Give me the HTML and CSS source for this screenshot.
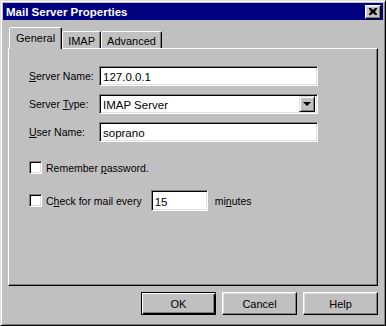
FILE: index.html
```html
<!DOCTYPE html>
<html lang="en">
<head>
    <meta charset="UTF-8">
    <meta name="viewport" content="width=device-width, initial-scale=1.0">
    <title>Mail Server Properties</title>
    <link rel="stylesheet" href="styles.css">
</head>
<body>
    <div class="window">
        <div class="titlebar">
            <span class="title">Mail Server Properties</span>
            <button class="close-btn" type="button">
                <svg width="8" height="7" viewBox="0 0 8 7">
                    <path d="M0 0h2l2 2 2-2h2v1L6 3.5 8 6v1H6L4 5 2 7H0V6l2-2.5L0 1z" fill="#000"/>
                </svg>
            </button>
        </div>

        <div class="content">
            <div class="tabs">
                <div class="tab active">General</div>
                <div class="tab">IMAP</div>
                <div class="tab">Advanced</div>
            </div>

            <div class="panel">
                <div class="field">
                    <label class="label"><u>S</u>erver Name:</label>
                    <div class="textbox">127.0.0.1</div>
                </div>
                <div class="field">
                    <label class="label">Server <u>T</u>ype:</label>
                    <div class="textbox select">
                        <span>IMAP Server</span>
                        <span class="drop-btn"><span class="arrow"></span></span>
                    </div>
                </div>
                <div class="field">
                    <label class="label"><u>U</u>ser Name:</label>
                    <div class="textbox">soprano</div>
                </div>

                <div class="check-row first">
                    <span class="checkbox"></span>
                    <span>Remember <u>p</u>assword.</span>
                </div>
                <div class="check-row">
                    <span class="checkbox"></span>
                    <span>C<u>h</u>eck for mail every</span>
                    <div class="textbox small">15</div>
                    <span>mi<u>n</u>utes</span>
                </div>
            </div>

            <div class="actions">
                <button class="btn default" type="button">OK</button>
                <button class="btn" type="button">Cancel</button>
                <button class="btn" type="button">Help</button>
            </div>
        </div>
    </div>
</body>
</html>
```

FILE: styles.css
```css
body {
    margin: 0;
    background-color: #c0c0c0;
    font-family: 'Liberation Sans', Arial, sans-serif;
    font-size: 10.5px;
    color: #000;
}

.window {
    width: 386px;
    height: 326px;
    box-sizing: border-box;
    border: 1px solid;
    border-color: #dfdfdf #000 #000 #dfdfdf;
    box-shadow: inset 1px 1px #fff, inset -1px -1px #808080;
    padding: 2px;
    background-color: #c0c0c0;
}

.titlebar {
    height: 17px;
    background-color: #000080;
    display: flex;
    align-items: center;
    justify-content: space-between;
    padding: 0 2px 0 3px;
}

.title {
    color: #fff;
    font-weight: bold;
    font-size: 11.5px;
}

.close-btn {
    width: 16px;
    height: 14px;
    padding: 0;
    background-color: #c0c0c0;
    border: 1px solid;
    border-color: #fff #000 #000 #fff;
    box-shadow: inset -1px -1px #808080, inset 1px 1px #dfdfdf;
    display: flex;
    align-items: center;
    justify-content: center;
}

.content {
    padding: 7px 5px 0 5px;
}

.tabs {
    display: flex;
    align-items: flex-end;
    height: 21px;
    padding-left: 1px;
    position: relative;
    z-index: 1;
}

.tab {
    height: 17px;
    box-sizing: border-box;
    border: 1px solid;
    border-bottom: none;
    border-color: #fff #000 transparent #fff;
    border-radius: 2px 2px 0 0;
    box-shadow: inset -1px 0 #808080;
    padding: 3px 5px 0 5px;
    background-color: #c0c0c0;
    font-size: 11px;
}

.tab.active {
    height: 22px;
    margin-bottom: -1px;
    padding: 4px 6px 0 6px;
}

.panel {
    height: 238px;
    box-sizing: border-box;
    border: 1px solid;
    border-color: #fff #000 #000 #fff;
    box-shadow: inset -1px -1px #808080;
    padding: 17px 20px 0 20px;
}

.field {
    display: flex;
    align-items: center;
    height: 20px;
    margin-bottom: 8px;
}

.label {
    width: 70px;
}

.textbox {
    width: 219px;
    height: 20px;
    box-sizing: border-box;
    background-color: #fff;
    border: 1px solid;
    border-color: #808080 #fff #fff #808080;
    box-shadow: inset 1px 1px #000, inset -1px -1px #dfdfdf;
    padding: 2px 3px 0 3px;
    font-size: 11.5px;
    display: flex;
    align-items: center;
}

.select {
    justify-content: space-between;
    padding-right: 2px;
}

.drop-btn {
    width: 16px;
    height: 16px;
    box-sizing: border-box;
    margin-top: -2px;
    border: 1px solid;
    border-color: #dfdfdf #000 #000 #dfdfdf;
    box-shadow: inset 1px 1px #fff, inset -1px -1px #808080;
    background-color: #c0c0c0;
    display: flex;
    align-items: center;
    justify-content: center;
}

.arrow {
    width: 0;
    height: 0;
    border-left: 4px solid transparent;
    border-right: 4px solid transparent;
    border-top: 4px solid #000;
}

.check-row {
    display: flex;
    align-items: center;
    height: 21px;
    margin-top: 12px;
}

.check-row.first {
    margin-top: 15px;
}

.checkbox {
    width: 13px;
    height: 13px;
    box-sizing: border-box;
    background-color: #fff;
    border: 1px solid;
    border-color: #808080 #fff #fff #808080;
    box-shadow: inset 1px 1px #000, inset -1px -1px #dfdfdf;
    margin-right: 4px;
}

.textbox.small {
    width: 57px;
    height: 21px;
    margin: 0 7px 0 9px;
}

.actions {
    display: flex;
    justify-content: flex-end;
    gap: 6px;
    margin-top: 6px;
}

.btn {
    width: 75px;
    height: 23px;
    padding: 0;
    font-family: 'Liberation Sans', Arial, sans-serif;
    font-size: 11px;
    color: #000;
    background-color: #c0c0c0;
    border: 1px solid;
    border-color: #fff #000 #000 #fff;
    box-shadow: inset -1px -1px #808080, inset 1px 1px #dfdfdf;
}

.btn.default {
    border-color: #000;
    box-shadow: inset 1px 1px #fff, inset -1px -1px #000, inset -2px -2px #808080;
}
```
